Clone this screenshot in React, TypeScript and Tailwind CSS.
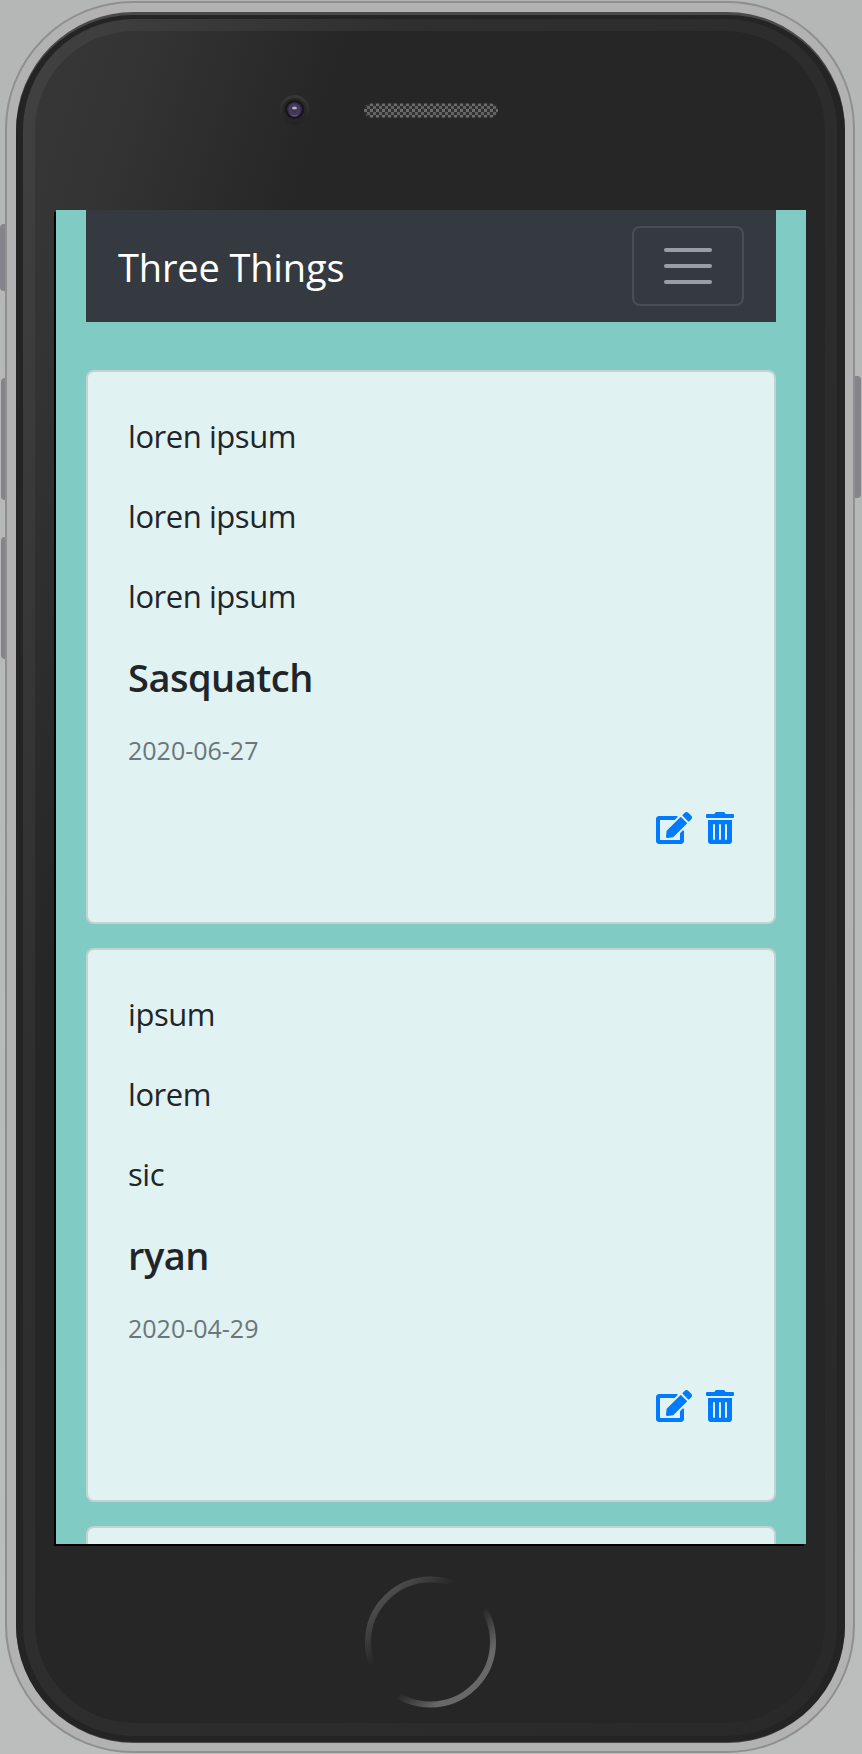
import { FaEdit, FaTrashAlt } from "react-icons/fa";

type Entry = { things: string[]; name: string; date: string };

const entries: Entry[] = [
  { things: ["loren ipsum", "loren ipsum", "loren ipsum"], name: "Sasquatch", date: "2020-06-27" },
  { things: ["ipsum", "lorem", "sic"], name: "ryan", date: "2020-04-29" },
];

function Card({ entry }: { entry: Entry }) {
  return (
    <article className="h-[554px] shrink-0 rounded-lg border-2 border-black/[.125] bg-[#e0f2f1] px-10 pt-10 text-[#212529]">
      <div className="flex flex-col gap-8">
        {entry.things.map((thing, i) => (
          <p key={i} className="h-12 text-[31px] leading-[48px] tracking-[-0.45px]">{thing}</p>
        ))}
      </div>
      <h2 className="mt-[33px] h-12 text-[38px] font-semibold leading-[48px] tracking-[-0.5px]">{entry.name}</h2>
      <p className="mt-[30px] h-[38px] text-[25px] leading-[38px] text-[#6c757d]">{entry.date}</p>
      <div className="mt-[43px] flex justify-end gap-[14px] text-[#007bff]">
        <FaEdit className="h-8 w-9" />
        <FaTrashAlt className="h-8 w-7" />
      </div>
    </article>
  );
}

function Screen() {
  return (
    <main className="flex h-[1334px] w-[750px] flex-col overflow-hidden bg-[#80cbc4] px-[30px]">
      <nav className="flex h-28 shrink-0 items-center justify-between bg-[#343a40] px-8">
        <span className="pt-0.5 text-[38px] leading-[60px] tracking-[-0.15px] text-white">Three Things</span>
        <button className="flex h-20 w-28 flex-col items-center justify-center gap-3 rounded-lg border-2 border-white/10">
          <span className="h-1 w-12 rounded-full bg-[#999da0]" />
          <span className="h-1 w-12 rounded-full bg-[#999da0]" />
          <span className="h-1 w-12 rounded-full bg-[#999da0]" />
        </button>
      </nav>
      <div className="mt-12 flex flex-col gap-6">
        {entries.map((entry) => (
          <Card key={entry.date} entry={entry} />
        ))}
        <article className="h-[554px] shrink-0 rounded-lg border-2 border-black/[.125] bg-[#e0f2f1]" />
      </div>
    </main>
  );
}

export default function App() {
  return (
    <div className="relative h-[1754px] w-[862px] overflow-hidden bg-linear-to-b from-[#b4b7b6] to-[#bbbebd] pl-[5px] pt-px font-['Open_Sans','Noto_Sans',sans-serif]">
      <div className="absolute left-0 top-[224px] h-[67px] w-2 rounded-l bg-[#84848a]" />
      <div className="absolute left-px top-[378px] h-[122px] w-2 rounded-l bg-[#84848a]" />
      <div className="absolute left-px top-[537px] h-[122px] w-2 rounded-l bg-[#84848a]" />
      <div className="absolute right-px top-[376px] h-[122px] w-2 rounded-r bg-[#84848a]" />
      <div className="relative h-[1752px] w-[850px] rounded-[128px] border-2 border-[#8f8f8f] bg-[#b2b2b2] pl-[9px] pt-[9px]">
        <div className="h-[1731px] w-[829px] rounded-[118px] bg-linear-to-b from-[#4a4a4a] via-[#353535] to-[#4a4a4a] pt-[3px]">
          <div className="h-[1727px] w-[829px] rounded-[117px] bg-[#242424] pl-[7px] pt-1">
            <div className="h-[1717px] w-[814px] rounded-[111px] bg-[linear-gradient(110deg,#424242_0%,#2f2f2f_27%,#2d2d2d_50%,#292929_100%)] pl-3 pt-3">
              <div className="flex h-[1692px] w-[790px] flex-col rounded-[99px] bg-[linear-gradient(108deg,#373737_0px,#343434_100px,#262626_300px)] pl-[21px]">
                <div className="flex h-[179px] shrink-0 pl-[222px] pt-[62px]">
                  <svg width="36" height="36" viewBox="0 0 36 36">
                    <defs>
                      <linearGradient id="rim" x1="0" y1="0" x2="0" y2="1"><stop stopColor="#383838" /><stop offset="1" stopColor="#232323" /></linearGradient>
                      <radialGradient id="lens"><stop stopColor="#332c46" /><stop offset=".65" stopColor="#493b62" /><stop offset="1" stopColor="#2a2438" /></radialGradient>
                    </defs>
                    <circle cx="16.5" cy="17" r="15" fill="url(#rim)" />
                    <circle cx="16.5" cy="17" r="12" fill="#262626" />
                    <circle cx="16.5" cy="16.5" r="9.5" fill="#17151b" />
                    <circle cx="16.5" cy="16.5" r="7.5" fill="url(#lens)" />
                    <path d="M11 20q5.500 5 11 0q-5.500 7-11 0" fill="#77658d" />
                    <ellipse cx="16.500" cy="15" rx="2.500" ry="1.500" fill="#b7aebf" />
                  </svg>
                  <svg className="ml-[50px] mt-[10px]" width="134" height="15" viewBox="0 0 134 15">
                    <defs>
                      <pattern id="mesh" width="6" height="6" patternUnits="userSpaceOnUse">
                        <rect width="6" height="6" fill="#303030" />
                        <rect width="3" height="3" fill="#6c6c6c" />
                        <rect x="3" y="3" width="3" height="3" fill="#626262" />
                      </pattern>
                    </defs>
                    <rect y="0.5" width="134" height="14" rx="7" fill="url(#mesh)" />
                  </svg>
                </div>
                <div className="w-[750px] shadow-[-2px_2px_0_#000]">
                  <Screen />
                </div>
                <svg className="ml-[308px] mt-8" width="132" height="132" viewBox="0 0 132 132">
                  <defs>
                    <linearGradient id="home" x1="0" y1="0" x2="1" y2="1">
                      <stop offset=".12" stopColor="#505050" />
                      <stop offset=".36" stopColor="#262626" />
                      <stop offset=".58" stopColor="#262626" />
                      <stop offset=".78" stopColor="#686868" />
                    </linearGradient>
                  </defs>
                  <circle cx="66.5" cy="66" r="62.500" fill="none" stroke="url(#home)" strokeWidth="6" />
                </svg>
              </div>
            </div>
          </div>
        </div>
      </div>
    </div>
  );
}
